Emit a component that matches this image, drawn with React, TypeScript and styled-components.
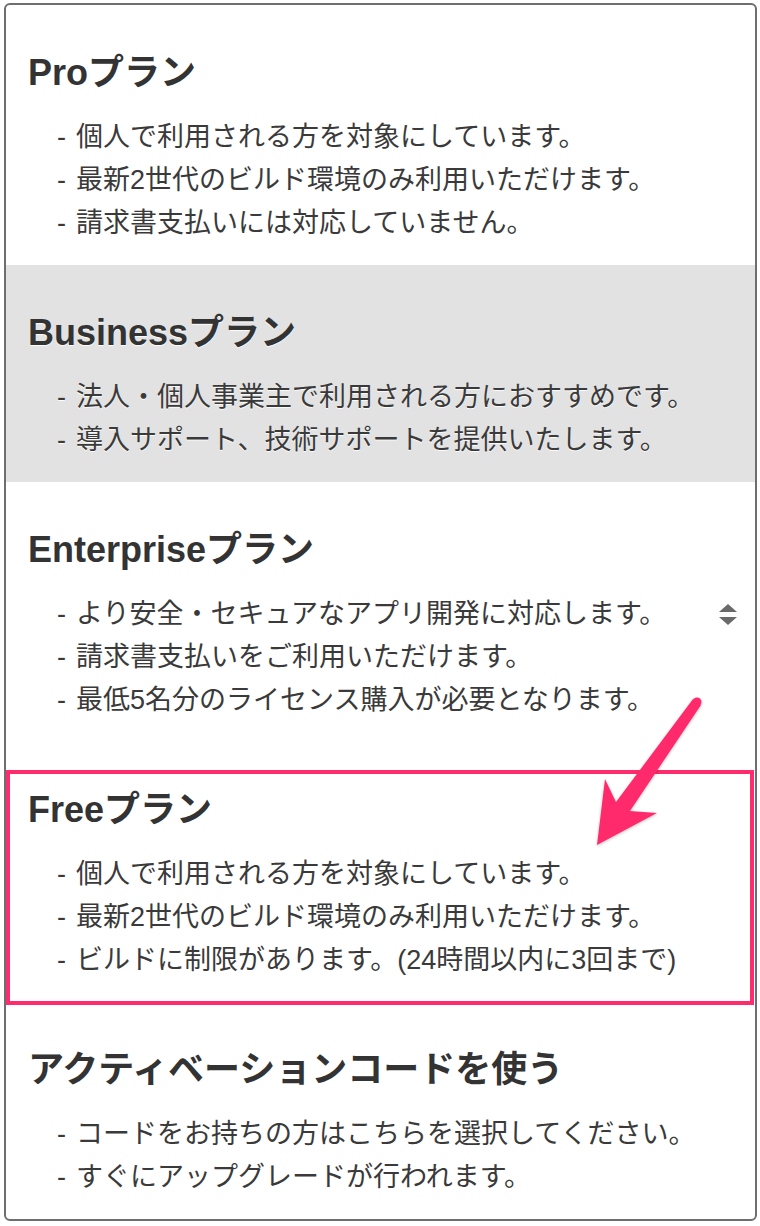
import React from 'react';
import styled, { createGlobalStyle } from 'styled-components';

const GlobalStyle = createGlobalStyle`
  html, body {
    margin: 0;
    padding: 0;
    background: #fff;
  }
  body {
    font-family: 'Liberation Sans', 'Noto Sans CJK JP', sans-serif;
    color: #333;
  }
`;

const Page = styled.div`
  position: relative;
  width: 760px;
  height: 1226px;
  overflow: hidden;
`;

const Panel = styled.div`
  box-sizing: border-box;
  width: 753px;
  margin: 3px 0 0 4px;
  border: 2px solid #6e6e6e;
  border-radius: 6px;
  background: #fff;
  overflow: hidden;
`;

const Section = styled.div<{ highlighted?: boolean }>`
  position: relative;
  padding: 46px 0 20px 22px;
  background: ${props => (props.highlighted ? '#e2e2e2' : 'transparent')};
  text-shadow: ${props => (props.highlighted ? '0 1px 1px rgba(255, 255, 255, 0.9)' : 'none')};
`;

const Title = styled.div`
  font-size: 36px;
  line-height: 44px;
  font-weight: 700;
  color: #333;
  margin-bottom: 21px;
  white-space: nowrap;
`;

const ItemList = styled.ul`
  list-style: none;
  margin: 0;
  padding: 0 0 0 29px;
`;

const Item = styled.li`
  display: flex;
  align-items: center;
  justify-content: space-between;
  padding-right: 18px;
  font-size: 27px;
  line-height: 43px;
  color: #3a3a3a;
  white-space: nowrap;
`;

const Dash = styled.span`
  display: inline-block;
  width: 19px;
`;

const Marked = styled.div`
  position: absolute;
  top: 28px;
  bottom: -3px;
  left: 0;
  right: 1px;
  border: 4px solid #fe2c6c;
  pointer-events: none;
`;

const Overlay = styled.svg`
  position: absolute;
  left: 0;
  top: 0;
  pointer-events: none;
`;

const SortIcon = () => (
  <svg width="18" height="22" viewBox="0 0 18 22">
    <path d="M9 0 L18 8 L0 8 Z" fill="#6a6a6a" />
    <path d="M0 13 L18 13 L9 21 Z" fill="#6a6a6a" />
  </svg>
);

type Plan = {
  title: string;
  items: string[];
  highlighted?: boolean;
  marked?: boolean;
  scroll?: boolean;
};

const plans: Plan[] = [
  {
    title: 'Proプラン',
    items: [
      '個人で利用される方を対象にしています。',
      '最新2世代のビルド環境のみ利用いただけます。',
      '請求書支払いには対応していません。',
    ],
  },
  {
    title: 'Businessプラン',
    highlighted: true,
    items: [
      '法人・個人事業主で利用される方におすすめです。',
      '導入サポート、技術サポートを提供いたします。',
    ],
  },
  {
    title: 'Enterpriseプラン',
    scroll: true,
    items: [
      'より安全・セキュアなアプリ開発に対応します。',
      '請求書支払いをご利用いただけます。',
      '最低5名分のライセンス購入が必要となります。',
    ],
  },
  {
    title: 'Freeプラン',
    marked: true,
    items: [
      '個人で利用される方を対象にしています。',
      '最新2世代のビルド環境のみ利用いただけます。',
      'ビルドに制限があります。(24時間以内に3回まで)',
    ],
  },
  {
    title: 'アクティベーションコードを使う',
    items: [
      'コードをお持ちの方はこちらを選択してください。',
      'すぐにアップグレードが行われます。',
    ],
  },
];

const App: React.FC = () => {
  return (
    <Page>
      <GlobalStyle />
      <Panel>
        {plans.map((plan) => (
          <Section key={plan.title} highlighted={plan.highlighted}>
            <Title>{plan.title}</Title>
            <ItemList>
              {plan.items.map((item, i) => (
                <Item key={item}>
                  <span>
                    <Dash>-</Dash>
                    {item}
                  </span>
                  {plan.scroll && i === 0 && <SortIcon />}
                </Item>
              ))}
            </ItemList>
            {plan.marked && <Marked />}
          </Section>
        ))}
      </Panel>

      {/* annotation arrow */}
      <Overlay width="760" height="1226" viewBox="0 0 760 1226">
        <defs>
          <filter id="soft" x="-20%" y="-20%" width="140%" height="140%">
            <feDropShadow dx="0" dy="1" stdDeviation="1.5" floodColor="#000" floodOpacity="0.25" />
          </filter>
        </defs>
        <g filter="url(#soft)" fill="#fe2c6c">
          <circle cx="697" cy="702" r="4.5" />
          <polygon points="693,699 616,802 605,779 597,845 657,813 630,811 701,705" />
        </g>
      </Overlay>
    </Page>
  );
};

export default App;
